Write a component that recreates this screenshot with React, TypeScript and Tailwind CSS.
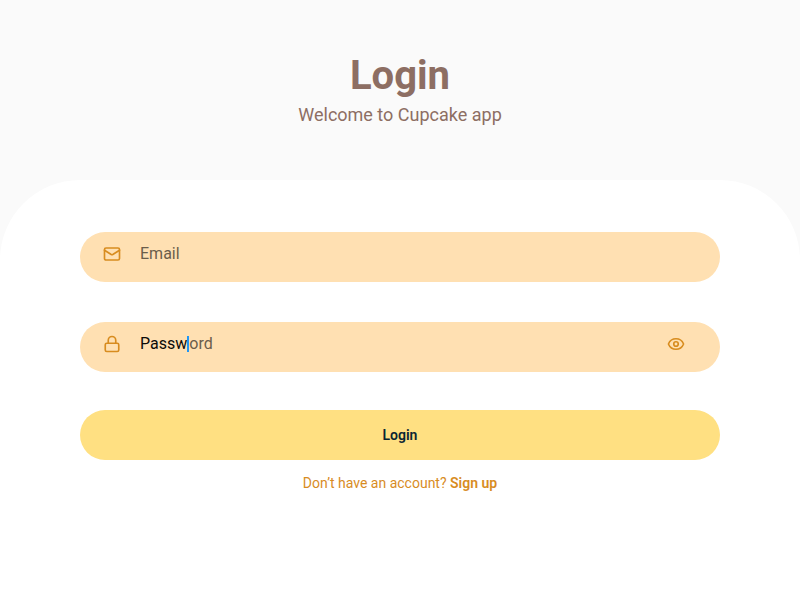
import React from "react";
import { Mail, Lock, Eye } from "lucide-react";

export default function App() {
  return (
    <div
      className="min-h-screen w-full flex flex-col bg-[#fafafa]"
      style={{ fontFamily: "Roboto, 'Liberation Sans', sans-serif" }}
    >
      {/* Header */}
      <div className="flex flex-col items-center pt-[56px] pb-[56px]">
        <h1 className="text-[40px] leading-[40px] font-bold text-[#8d6e63]">Login</h1>
        <p className="mt-[9px] text-[18px] leading-[19px] text-[#8d6e63]">
          Welcome to Cupcake app
        </p>
      </div>

      {/* Card */}
      <div className="flex-1 bg-white rounded-t-[80px] px-[80px] pt-[52px] flex flex-col">
        {/* Email */}
        <div className="h-[50px] rounded-full bg-[#ffe0b2] flex items-center pl-[23px] pr-[35px] pb-[7px]">
          <Mail size={18} strokeWidth={2.2} className="text-[#d88c1f] shrink-0" />
          <span className="ml-[19px] text-[16px] leading-[16px] text-[#6b5d4b]">Email</span>
        </div>

        {/* Password */}
        <div className="mt-[40px] h-[50px] rounded-full bg-[#ffe0b2] flex items-center pl-[23px] pr-[35px] pb-[7px]">
          <Lock size={18} strokeWidth={2.2} className="text-[#d88c1f] shrink-0" />
          <div className="ml-[19px] flex-1 flex items-center text-[16px] leading-[16px]">
            <span className="text-[#0c0b09]">Passw</span>
            <span className="w-[2px] h-[16px] bg-[#2196f3]" />
            <span className="text-[#6b5d4b]">ord</span>
          </div>
          <Eye size={18} strokeWidth={2.2} className="text-[#d88c1f] shrink-0" />
        </div>

        {/* Button */}
        <button className="mt-[38px] h-[50px] rounded-full bg-[#ffe082] flex items-center justify-center">
          <span className="text-[14px] leading-[14px] font-semibold text-[#0a2533]">Login</span>
        </button>

        {/* Footer */}
        <p className="mt-[16px] text-center text-[14px] leading-[14px] text-[#d88c1f]">
          Don’t have an account? <span className="font-semibold">Sign up</span>
        </p>
      </div>
    </div>
  );
}
